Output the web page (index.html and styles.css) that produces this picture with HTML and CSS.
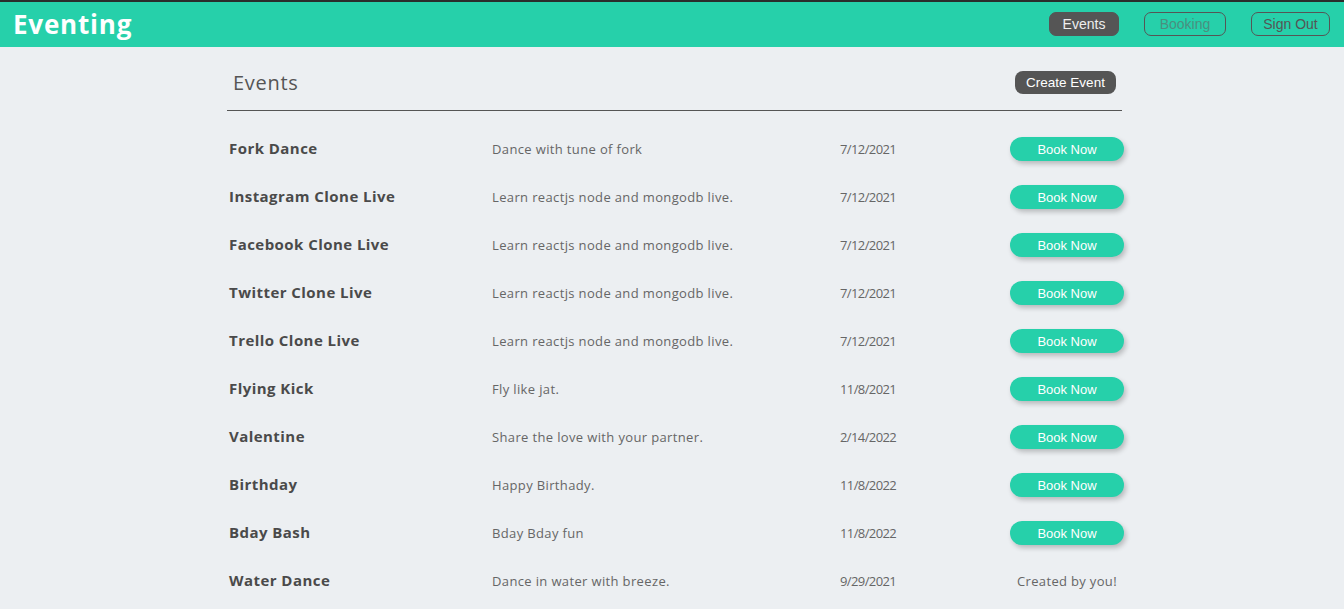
FILE: index.html
```html
<!DOCTYPE html>
<html lang="en">
<head>
<meta charset="utf-8">
<title>Eventing</title>
<link rel="stylesheet" href="styles.css">
</head>
<body>
<header class="topbar">
  <div class="brand">Eventing</div>
  <nav class="nav">
    <a class="nav-btn active">Events</a>
    <a class="nav-btn outline faded">Booking</a>
    <a class="nav-btn outline">Sign Out</a>
  </nav>
</header>
<main class="content">
  <div class="head-row">
    <h1 class="page-title">Events</h1>
    <button class="create-btn">Create Event</button>
  </div>
  <div class="list">
    <div class="row"><div class="title">Fork Dance</div><div class="desc">Dance with tune of fork</div><div class="date">7/12/2021</div><div class="action"><button class="book-btn">Book Now</button></div></div>
    <div class="row"><div class="title">Instagram Clone Live</div><div class="desc">Learn reactjs node and mongodb live.</div><div class="date">7/12/2021</div><div class="action"><button class="book-btn">Book Now</button></div></div>
    <div class="row"><div class="title">Facebook Clone Live</div><div class="desc">Learn reactjs node and mongodb live.</div><div class="date">7/12/2021</div><div class="action"><button class="book-btn">Book Now</button></div></div>
    <div class="row"><div class="title">Twitter Clone Live</div><div class="desc">Learn reactjs node and mongodb live.</div><div class="date">7/12/2021</div><div class="action"><button class="book-btn">Book Now</button></div></div>
    <div class="row"><div class="title">Trello Clone Live</div><div class="desc">Learn reactjs node and mongodb live.</div><div class="date">7/12/2021</div><div class="action"><button class="book-btn">Book Now</button></div></div>
    <div class="row"><div class="title">Flying Kick</div><div class="desc">Fly like jat.</div><div class="date">11/8/2021</div><div class="action"><button class="book-btn">Book Now</button></div></div>
    <div class="row"><div class="title">Valentine</div><div class="desc">Share the love with your partner.</div><div class="date">2/14/2022</div><div class="action"><button class="book-btn">Book Now</button></div></div>
    <div class="row"><div class="title">Birthday</div><div class="desc">Happy Birthady.</div><div class="date">11/8/2022</div><div class="action"><button class="book-btn">Book Now</button></div></div>
    <div class="row"><div class="title">Bday Bash</div><div class="desc">Bday Bday fun</div><div class="date">11/8/2022</div><div class="action"><button class="book-btn">Book Now</button></div></div>
    <div class="row"><div class="title">Water Dance</div><div class="desc">Dance in water with breeze.</div><div class="date">9/29/2021</div><div class="action"><span class="owner">Created by you!</span></div></div>
  </div>
</main>
</body>
</html>
```
FILE: styles.css
```css
html, body {
  margin: 0;
  padding: 0;
}
body {
  background: #eceff2;
  font-family: "Open Sans", "DejaVu Sans", sans-serif;
  color: #555;
  overflow: hidden;
}
.topbar {
  height: 45px;
  border-top: 2px solid #2a2d2c;
  background: #26d0aa;
  display: flex;
  align-items: center;
  justify-content: space-between;
  padding: 0 14px 0 13px;
}
.brand {
  font-family: "Open Sans", sans-serif;
  font-weight: 700;
  font-size: 26px;
  color: #fff;
  letter-spacing: 0.8px;
  margin-top: -2px;
}
.nav {
  display: flex;
  gap: 25px;
  align-items: center;
  margin-top: -2px;
}
.nav-btn {
  font-family: "Liberation Sans", Arial, sans-serif;
  font-size: 14px;
  height: 24px;
  box-sizing: border-box;
  display: flex;
  align-items: center;
  justify-content: center;
  border-radius: 7px;
  border: 1px solid #555;
  color: #555;
}
.nav-btn.active {
  width: 70px;
  background: #555;
  color: #eee;
}
.nav-btn.outline {
  width: 82px;
}
.nav-btn.outline:last-child {
  width: 79px;
}
.nav-btn.faded {
  color: #4a8f7f;
}
.content {
  width: 895px;
  margin: 0 0 0 227px;
}
.head-row {
  display: flex;
  justify-content: space-between;
  align-items: center;
  height: 63px;
  border-bottom: 1px solid #555;
  padding: 0 6px 0 6px;
}
.page-title {
  margin: 0;
  font-weight: 400;
  font-size: 20px;
  letter-spacing: 0.7px;
  color: #555;
  margin-top: 7px;
}
.create-btn {
  font-family: "Liberation Sans", Arial, sans-serif;
  font-size: 13.5px;
  background: #555;
  color: #fff;
  border: none;
  border-radius: 8px;
  width: 101px;
  height: 23px;
  padding: 0;
  margin-top: 8px;
}
.list {
  padding-top: 14px;
}
.row {
  display: grid;
  grid-template-columns: 263px 348px 170px 114px;
  align-items: center;
  height: 48px;
  padding-left: 2px;
}
.title {
  font-weight: 700;
  font-size: 15px;
  letter-spacing: 0.45px;
  color: #4a4a4a;
  margin-top: -2px;
}
.desc, .date {
  font-size: 13px;
  letter-spacing: 0.36px;
  color: #666;
}
.date {
  letter-spacing: -0.6px;
}
.action {
  display: flex;
  justify-content: center;
}
.book-btn {
  font-family: "Liberation Sans", Arial, sans-serif;
  font-size: 13px;
  width: 114px;
  height: 24px;
  background: #26d0aa;
  color: #fff;
  border: none;
  border-radius: 12px;
  padding: 0;
  box-shadow: 2px 3px 5px rgba(0, 0, 0, 0.22);
}
.owner {
  font-size: 13px;
  letter-spacing: 0.33px;
  color: #666;
}
```
